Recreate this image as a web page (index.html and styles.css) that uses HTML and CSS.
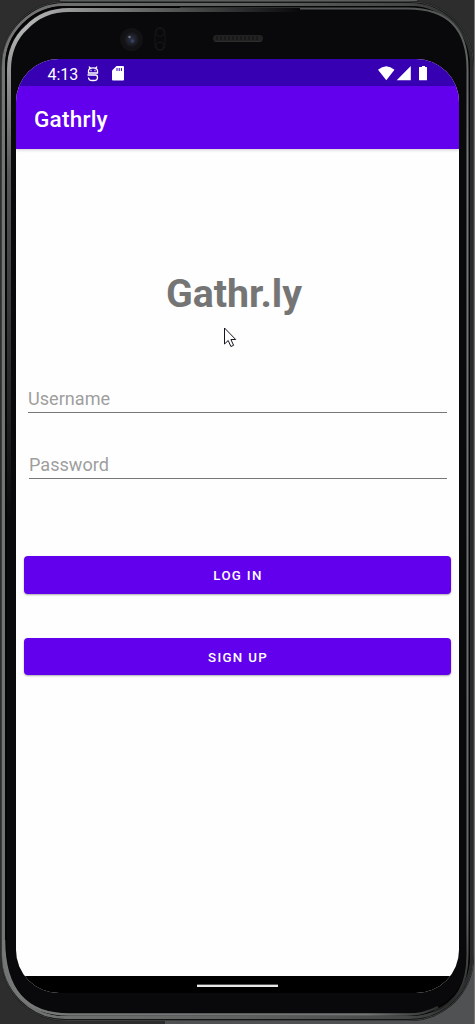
FILE: index.html
```html
<!DOCTYPE html>
<html lang="en">
<head>
<meta charset="utf-8">
<title>Gathrly</title>
<link rel="stylesheet" href="styles.css">
</head>
<body>
<div class="desk">
  <svg class="frame" width="475" height="1024" viewBox="0 0 475 1024" fill="none">
    <defs>
      <linearGradient id="outer" x1="0" y1="0" x2="1" y2="0"><stop offset="0" stop-color="#737575"/><stop offset=".5" stop-color="#606262"/><stop offset=".86" stop-color="#464848"/><stop offset="1" stop-color="#292b2b"/></linearGradient>
      <linearGradient id="shineTop" gradientUnits="userSpaceOnUse" x1="27" y1="0" x2="300" y2="0"><stop offset="0" stop-color="#b4b6b6"/><stop offset=".25" stop-color="#858787"/><stop offset=".6" stop-color="#4a4c4c"/><stop offset="1" stop-color="#09090b"/></linearGradient>
      <linearGradient id="shineSide" gradientUnits="userSpaceOnUse" x1="0" y1="27" x2="0" y2="520"><stop offset="0" stop-color="#b4b6b6"/><stop offset=".1" stop-color="#909292"/><stop offset=".3" stop-color="#555757"/><stop offset="1" stop-color="#09090b"/></linearGradient>
      <linearGradient id="side" x1="0" y1="0" x2="0" y2="1"><stop offset="0" stop-color="#555757"/><stop offset=".15" stop-color="#777979"/><stop offset=".9" stop-color="#656767"/><stop offset="1" stop-color="#222"/></linearGradient>
      <linearGradient id="base" gradientUnits="userSpaceOnUse" x1="0" y1="0" x2="460" y2="0"><stop offset="0" stop-color="#777979"/><stop offset=".8" stop-color="#747676"/><stop offset="1" stop-color="#161717"/></linearGradient>
      <radialGradient id="lens"><stop offset="0" stop-color="#2b304b"/><stop offset=".6" stop-color="#1e2027"/><stop offset="1" stop-color="#111114"/></radialGradient>
    </defs>
    <path fill="#505153" d="M400 900h75v124H165v-4h235z"/>
    <path fill="#5c5e5e" d="M60 0h357v1H60z"/>
    <path fill="#777" d="M474 0h1v1024h-1z"/>
    <rect x="1" y="1" width="473" height="1020" rx="64" fill="#151616"/>
    <rect x="1.500" y="1.500" width="472" height="1019" rx="64" stroke="#3b3d3d"/>
    <rect x="3.500" y="4.500" width="468" height="1013" rx="62" stroke="url(#outer)" stroke-width="3"/>
    <rect x="6" y="7" width="463" height="1008" rx="59" fill="#09090b" stroke="#050506" stroke-width="2"/>
    <path d="M180 8.500H408Q467.500 8.500 467.500 69V955Q467.500 1000 434 1011" stroke="url(#side)" stroke-width="2"/>
    <path d="M9 520V70Q9 43 27 27" stroke="url(#shineSide)" stroke-width="4"/>
    <path d="M26.500 27.500Q43 10 69 10H300" stroke="url(#shineTop)" stroke-width="4"/>
    <path d="M4 940Q4 1014.500 69 1014.500H408Q424 1014.500 438 1007" stroke="url(#base)" stroke-width="2.500"/>
    <circle cx="131.500" cy="39.500" r="11.500" fill="#121214"/><circle cx="131.500" cy="39.500" r="8" fill="url(#lens)"/><circle cx="129.500" cy="37" r="1.200" fill="#777a82"/><circle cx="132.500" cy="41" r="1.800" fill="#38415f"/>
    <g stroke="#161619"><rect x="155" y="27.500" width="10" height="23" rx="5"/><circle cx="160" cy="32.500" r="4"/><circle cx="160" cy="46" r="4"/></g>
    <rect x="213" y="35" width="50" height="7" rx="3.500" fill="#222"/>
    <path d="M216 38h44" stroke="#191919" stroke-width="4" stroke-dasharray="2 2"/>
    <path d="M215 41.500h46" stroke="#2d2d2d"/>
  </svg>
  <main class="screen">
    <div class="status">
      <span class="clock">4:13</span>
      <svg class="debug" width="12" height="16" viewBox="0 0 12 16" fill="none" stroke="#fff" stroke-width="1.300"><path d="M1.500 7V5Q1.500 1.800 6 1.800T10.500 5v2zM2 .5l1.300 2M10 .5L8.700 2.500M.5 9h8q2 0 2 2.500 0 3-3.500 3H5q-3.500 0-3.500-3"/><path d="M3.500 4.500h1M7.500 4.500h1"/></svg>
      <svg class="sdcard" width="12" height="15" viewBox="0 0 12 15"><path fill="#fff" d="M4.500 0H11q1 0 1 1v12.500q0 1-1 1H1q-1 0-1-1V4.500z"/><path stroke="#3700b3" stroke-width="1" d="M5 2v3M7.200 2v3M9.400 2v3"/></svg>
      <svg class="signals" width="50" height="15" viewBox="0 0 50 15" fill="#fff"><path d="M0 3.800Q8.200-3.200 16.500 3.800L8.300 14.200zM32.800 0v14.200H18.700zM44 1V0h3v1h1.500q.5 0 .5.500v12.200q0 .5-.5.500h-7q-.5 0-.5-.5V1.500q0-.5.500-.5z"/></svg>
    </div>
    <header class="toolbar">Gathrly</header>
    <section class="login">
      <h1>Gathr.ly</h1>
      <div class="field">Username</div>
      <div class="field password">Password</div>
      <button class="btn">LOG IN</button>
      <button class="btn signup">SIGN UP</button>
    </section>
    <div class="navbar"><span class="handle"></span></div>
  </main>
  <svg class="cursor" width="14" height="21" viewBox="0 0 14 21"><path d="M1.500 1v16l3.700-3.500 2.700 6 2.700-1.200-2.700-5.800h4.800z" fill="#fff" stroke="#151521"/></svg>
</div>
</body>
</html>
```
FILE: styles.css
```css
* { box-sizing: border-box; }
body { margin: 0; font-family: Roboto, "Liberation Sans", sans-serif; }
.desk { position: relative; width: 475px; height: 1024px; padding: 59px 16px 31px; overflow: hidden; background: #2d2d2d; }
.frame { position: absolute; inset: 0; }
.screen { position: relative; height: 934px; width: 443px; border-radius: 43px; overflow: hidden; background: #fefefe; display: flex; flex-direction: column; }
.status { height: 27px; flex: none; display: flex; align-items: center; padding: 2px 31px 0 31.500px; color: #fff; background: #3700b3; }
.clock { font-size: 16px; width: 39.500px; padding-top: 2px; line-height: 20px; }
.sdcard { margin-left: 13px; }
.signals { margin-left: auto; }
.toolbar { height: 63px; flex: none; padding: 0 18px; line-height: 67px; font-size: 22.600px; letter-spacing: 0.200px; font-weight: 500; color: #fff; background: #6200ee; box-shadow: 0 1px 3px #0003; }
.login { flex: 1; padding: 122px 8px 0; }
h1 { margin: 0 0 66px; padding-right: 7px; line-height: 46px; text-align: center; font-size: 39.300px; color: #757575; }
.field { height: 30px; margin: 0 4px 36px; padding-top: 3px; line-height: 26px; font-size: 18.100px; color: #9e9e9e; border-bottom: 1px solid #777; }
.password { margin: 0 4px 77px 5px; }
.btn { display: block; width: 427px; height: 38px; padding: 1px 0 0 1px; border: 0; border-radius: 4px; color: #fff; background: #6200ee; font: 500 13.300px Roboto, sans-serif; letter-spacing: 1.300px; box-shadow: 0 1px 2px #0005; }
.signup { height: 37px; margin-top: 44px; padding-top: 2px; }
.navbar { flex: none; height: 17px; background: #000; display: flex; justify-content: center; padding-top: 8px; }
.handle { width: 81px; height: 3px; background: #e8e8e8; border-top: 1px solid #555; }
.cursor { position: absolute; left: 223px; top: 327px; }
```
